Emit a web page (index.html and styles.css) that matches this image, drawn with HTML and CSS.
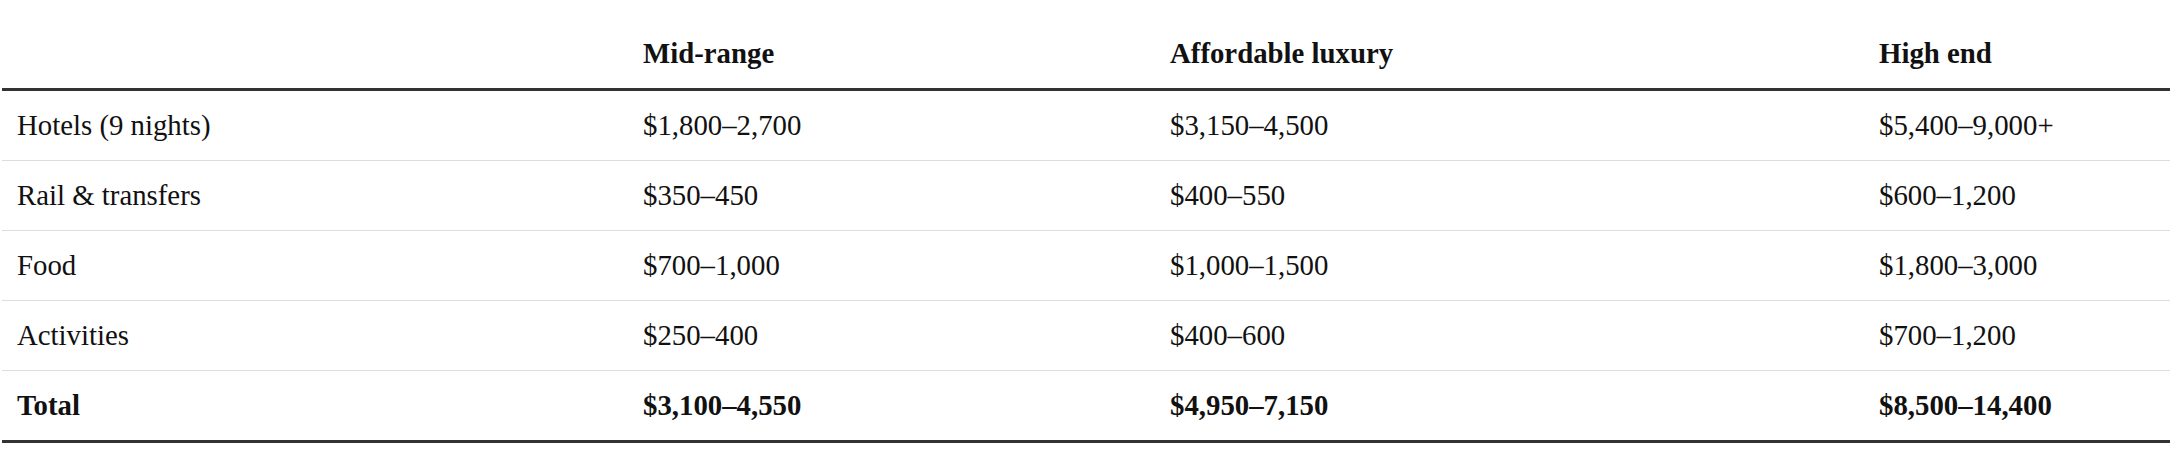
FILE: index.html
```html
<!DOCTYPE html>
<html lang="en">
<head>
<meta charset="utf-8">
<title>Trip budget</title>
<link rel="stylesheet" href="styles.css">
</head>
<body>
<main class="page">
  <table class="budget">
    <colgroup>
      <col class="col-label">
      <col class="col-mid">
      <col class="col-lux">
      <col class="col-high">
    </colgroup>
    <thead>
      <tr>
        <th></th>
        <th>Mid-range</th>
        <th>Affordable luxury</th>
        <th>High end</th>
      </tr>
    </thead>
    <tbody>
      <tr>
        <td>Hotels (9 nights)</td>
        <td>$1,800–2,700</td>
        <td>$3,150–4,500</td>
        <td>$5,400–9,000+</td>
      </tr>
      <tr>
        <td>Rail &amp; transfers</td>
        <td>$350–450</td>
        <td>$400–550</td>
        <td>$600–1,200</td>
      </tr>
      <tr>
        <td>Food</td>
        <td>$700–1,000</td>
        <td>$1,000–1,500</td>
        <td>$1,800–3,000</td>
      </tr>
      <tr>
        <td>Activities</td>
        <td>$250–400</td>
        <td>$400–600</td>
        <td>$700–1,200</td>
      </tr>
      <tr class="total">
        <td>Total</td>
        <td>$3,100–4,550</td>
        <td>$4,950–7,150</td>
        <td>$8,500–14,400</td>
      </tr>
    </tbody>
  </table>
</main>
</body>
</html>
```

FILE: styles.css
```css
html, body {
  margin: 0;
  padding: 0;
  background: #ffffff;
}

.page {
  padding: 19px 0 0 2px;
  font-family: "Liberation Serif", "Times New Roman", serif;
  font-size: 28.8px;
  color: #111111;
}

.budget {
  width: 2168px;
  border-collapse: separate;
  border-spacing: 0;
  table-layout: fixed;
}

.col-label { width: 626px; }
.col-mid { width: 527px; }
.col-lux { width: 709px; }
.col-high { width: 306px; }

.budget th,
.budget td {
  text-align: left;
  vertical-align: middle;
  padding: 0 15px;
  height: 69px;
  line-height: 33px;
  box-sizing: content-box;
}

.budget th {
  font-weight: 700;
  border-bottom: 3px solid #333333;
}

.budget td {
  border-bottom: 1px solid #dddddd;
}

.budget tr.total td {
  font-weight: 700;
  border-bottom: 3px solid #333333;
}
```
